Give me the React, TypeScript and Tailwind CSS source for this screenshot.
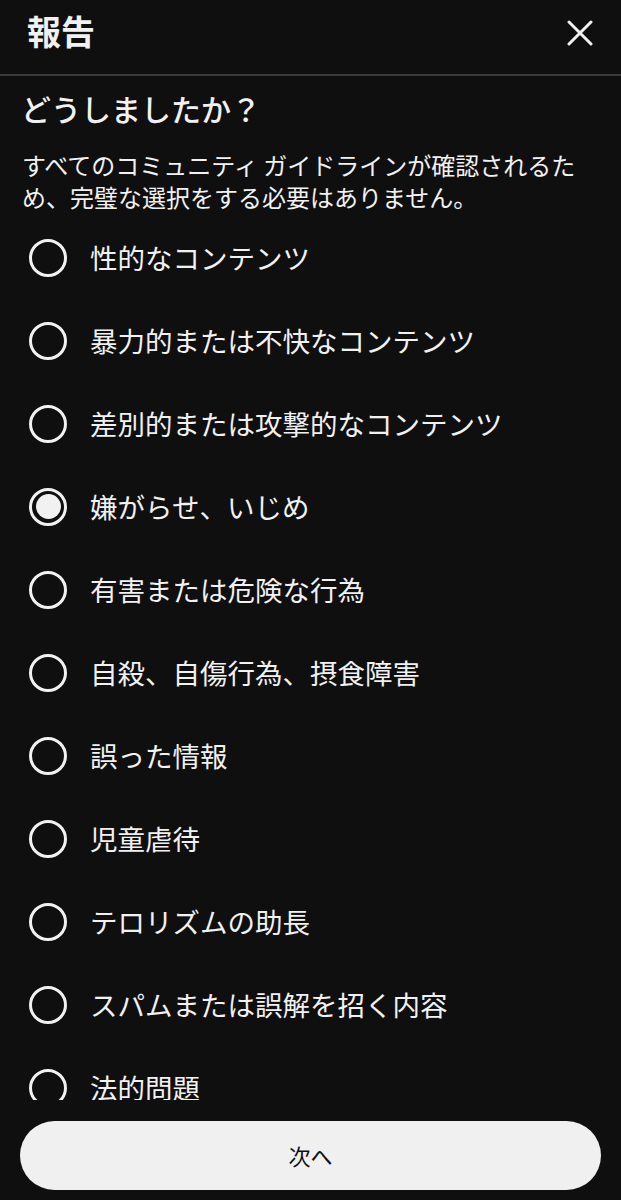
import React from "react";

const options = [
  "性的なコンテンツ",
  "暴力的または不快なコンテンツ",
  "差別的または攻撃的なコンテンツ",
  "嫌がらせ、いじめ",
  "有害または危険な行為",
  "自殺、自傷行為、摂食障害",
  "誤った情報",
  "児童虐待",
  "テロリズムの助長",
  "スパムまたは誤解を招く内容",
  "法的問題",
];

const font = { fontFamily: '"Noto Sans CJK JP", "Noto Sans", sans-serif' };

function Radio({ checked }: { checked: boolean }) {
  return (
    <div className="w-[38px] h-[38px] shrink-0 rounded-full border-[3px] border-[#f1f1f1] flex items-center justify-center">
      {checked && <div className="w-[25px] h-[25px] rounded-full bg-[#f1f1f1]" />}
    </div>
  );
}

export default function App() {
  return (
    <div className="h-[1200px] w-full bg-[#0f0f0f] text-[#f1f1f1] flex flex-col overflow-hidden" style={font}>
      <div className="h-[76px] shrink-0 flex items-center justify-between pl-[27px] pr-[28px] pb-[12px] border-b-2 border-[#3a3a3a] box-border">
        <div className="text-[34px] font-bold leading-none">報告</div>
        <svg width="26" height="26" viewBox="0 0 26 26" className="mt-[4px]">
          <path d="M2 2 L24 24 M24 2 L2 24" stroke="#f1f1f1" strokeWidth="3" strokeLinecap="round" />
        </svg>
      </div>
      <div className="flex-1 overflow-hidden">
        <div className="pt-[14px]">
          <div className="px-[21px] text-[30px] font-medium leading-[36px]">どうしましたか？</div>
          <div className="mt-[23px] pl-[22px] pr-[24px] text-[24px] leading-[32px]">
            すべてのコミュニティ ガイドラインが確認されるため、完璧な選択をする必要はありません。
          </div>
          <div className="mt-[3px] flex flex-col">
            {options.map((o, i) => (
              <div key={o} className="h-[83px] shrink-0 flex items-center gap-[23px] px-[29px]">
                <Radio checked={i === 3} />
                <div className="text-[27.5px] leading-none">{o}</div>
              </div>
            ))}
          </div>
        </div>
      </div>
      <div className="shrink-0 px-[20px] pt-[21px] pb-[10px]">
        <div className="h-[69px] rounded-full bg-[#f0f0f0] text-[#0f0f0f] flex items-center justify-center text-[22px]">
          次へ
        </div>
      </div>
    </div>
  );
}
